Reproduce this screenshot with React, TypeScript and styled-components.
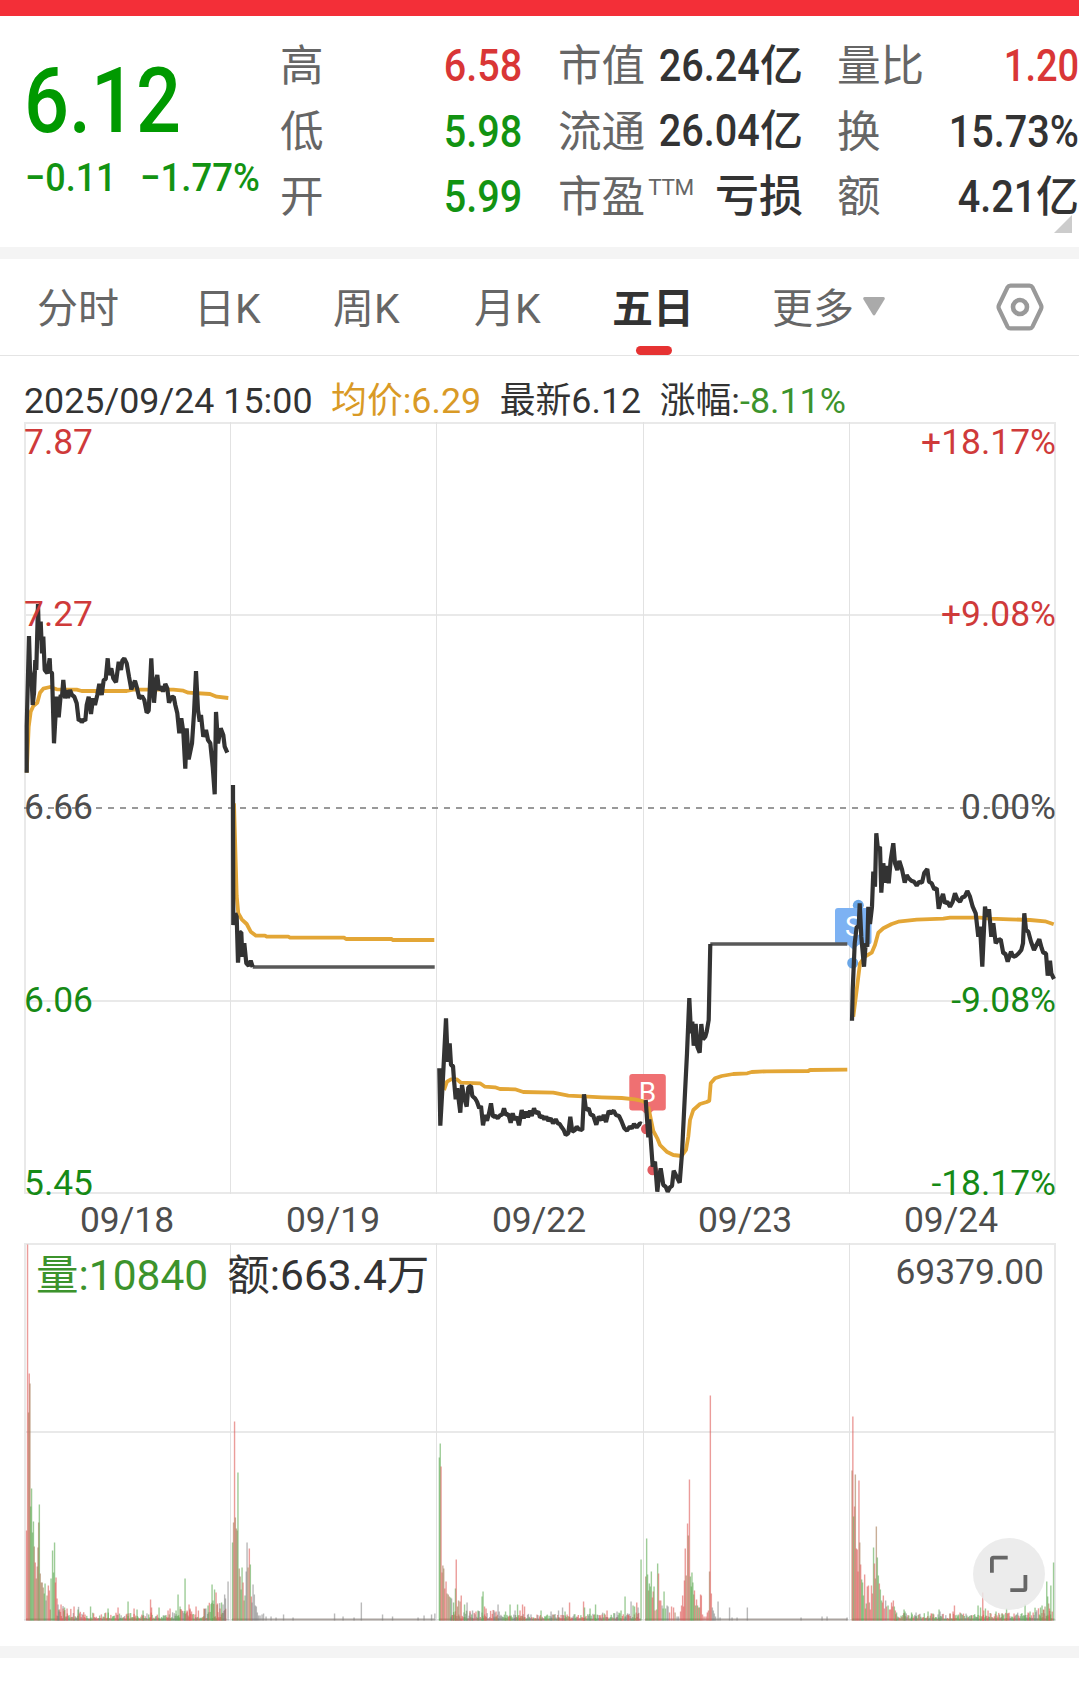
import React from "react";
import styled, { createGlobalStyle } from "styled-components";

const RED = "#d93636";
const GREEN = "#129312";
const INK = "#333333";
const MUTED = "#666666";
const LINE = "#e9e9e9";

const GlobalStyle = createGlobalStyle`
  * { box-sizing: border-box; }
  body {
    margin: 0;
    background: #fff;
    color: ${INK};
    font-family: Roboto, "Noto Sans CJK SC", sans-serif;
  }
`;

const Page = styled.main`
  width: 1079px;
  height: 1689px;
  overflow: hidden;
  display: flex;
  flex-direction: column;
  background: #fff;
`;

const StatusBar = styled.div`
  height: 16px;
  flex: none;
  background: #f32f38;
`;

const Divider = styled.div`
  height: 12px;
  flex: none;
  background: #f4f4f4;
`;

/* ---------- quote header ---------- */

const Quote = styled.section`
  position: relative;
  height: 231px;
  flex: none;
  display: grid;
  grid-template-columns: 255px 242px 277px 280px;
  padding: 17px 0 0 25px;
`;

const Summary = styled.div`
  display: flex;
  flex-direction: column;
  white-space: nowrap;
`;

const Narrow = styled.span<{ $k: number; $origin?: string }>`
  display: inline-block;
  transform: scaleX(${(p) => p.$k});
  transform-origin: ${(p) => p.$origin ?? "right"} center;
`;

const LastPrice = styled.div`
  height: 104px;
  margin-left: -1px;
  padding-top: 15px;
  font-size: 90px;
  line-height: 107px;
  font-weight: 500;
  color: #009900;
`;

const Changes = styled.div`
  display: grid;
  grid-template-columns: 115px auto;
  margin-top: 18px;
  font-size: 39.5px;
  line-height: 46px;
  font-weight: 500;
  color: ${GREEN};
`;

const StatColumn = styled.dl<{ $indent: number }>`
  margin: 0;
  padding-left: ${(p) => p.$indent}px;
  display: grid;
  grid-template-rows: repeat(3, 65.5px);
`;

const Stat = styled.div`
  display: flex;
  justify-content: space-between;
  align-items: center;
  font-size: 43.6px;
  line-height: 65px;
  white-space: nowrap;
`;

const StatLabel = styled.dt`
  display: flex;
  padding-top: 2px;
  color: ${MUTED};
`;

const Sup = styled.span`
  margin-left: 3px;
  font-size: 22.5px;
  line-height: 45px;
  font-weight: 400;
  letter-spacing: -0.4px;
`;

const StatValue = styled.dd<{ $color?: string }>`
  margin: 0;
  font-size: 45px;
  font-weight: 500;
  color: ${(p) => p.$color ?? INK};
`;

const Unit = styled.span<{ $wide?: boolean }>`
  font-size: ${(p) => (p.$wide ? 44 : 43)}px;
`;

const Corner = styled.svg`
  position: absolute;
  left: 1054px;
  top: 199px;
`;

/* ---------- period tabs ---------- */

const Tabs = styled.nav`
  height: 97px;
  flex: none;
  display: grid;
  grid-template-columns: 157px 139px 141px 138px 160px 223px auto;
  padding-left: 37px;
  border-bottom: 1px solid #e4e4e4;
`;

const Tab = styled.button<{ $active?: boolean }>`
  position: relative;
  display: flex;
  align-items: center;
  border: 0;
  padding: 0 0 4px;
  background: none;
  font-family: inherit;
  font-size: 41px;
  font-weight: ${(p) => (p.$active ? 700 : 400)};
  color: ${(p) => (p.$active ? INK : MUTED)};
  white-space: nowrap;

  &::after {
    content: "";
    display: ${(p) => (p.$active ? "block" : "none")};
    position: absolute;
    left: 24px;
    bottom: 0;
    width: 36px;
    height: 9px;
    border-radius: 5px;
    background: #e63232;
  }
`;

const Caret = styled.svg`
  margin: 3px 0 0 9px;
`;

const SettingsButton = styled.button`
  display: flex;
  align-items: center;
  border: 0;
  padding: 0 0 1px 1px;
  background: none;
`;

/* ---------- chart ---------- */

const Info = styled.div`
  height: 66px;
  flex: none;
  display: flex;
  gap: 18.6px;
  padding: 19px 0 0 24px;
  font-size: 35.8px;
  line-height: 53px;
  white-space: pre;
`;

const Tone = styled.span<{ $color: string }>`
  color: ${(p) => p.$color};
`;

const PriceChart = styled.section`
  position: relative;
  height: 772px;
  flex: none;

  svg { display: block; }
`;

const Axis = styled.div<{ $side: "left" | "right" }>`
  position: absolute;
  top: 0;
  ${(p) => (p.$side === "left" ? "left: 24px;" : "right: 23px;")}
  height: 772px;
  text-align: ${(p) => p.$side};
`;

const Tick = styled.span<{ $y: number; $side: "left" | "right"; $color: string }>`
  position: absolute;
  ${(p) => p.$side}: 0;
  top: ${(p) => p.$y - 21}px;
  font-size: 35.4px;
  line-height: 40px;
  color: ${(p) => p.$color};
`;

const Dates = styled.div`
  height: 49px;
  flex: none;
  display: grid;
  grid-template-columns: repeat(5, 206px);
  padding-left: 24px;
  font-size: 35.4px;
  line-height: 52px;
  text-align: center;
  color: #4d4d4d;
`;

const VolumeChart = styled.section`
  position: relative;
  height: 403px;
  flex: none;

  svg { display: block; }
`;

const VolumeLegend = styled.div`
  position: absolute;
  top: 3px;
  left: 36px;
  right: 35px;
  display: flex;
  font-size: 42.5px;
  line-height: 60px;
  white-space: nowrap;
`;

const Turnover = styled.span`
  margin-left: 19px;
`;

const MaxVolume = styled.span`
  margin-left: auto;
  font-size: 35.4px;
  line-height: 52px;
  color: #4d4d4d;
`;

const ExpandButton = styled.button`
  position: absolute;
  left: 973px;
  top: 295px;
  width: 72px;
  height: 72px;
  border: 0;
  border-radius: 50%;
  padding: 0;
  background: rgba(232, 232, 232, 0.84);
`;

/* ---------- series ---------- */

type Series = { ox: number; oy: number; price: string; avg: string; flat?: string };

// Points are stored at three units per pixel, relative to each session's origin.
const sessions: Series[] = [
  {
    ox: 10, oy: 580,
    price: "50,578 50,440 57,168 60,270 65,300 68,375 72,340 76,240 79,270 84,72 87,180 92,125 96,220 100,170 104,270 112,280 119,235 121,275 126,278 132,490 136,420 140,350 146,412 152,345 156,350 160,300 165,355 170,330 174,354 180,330 186,345 193,350 200,370 206,422 212,418 215,428 220,418 226,422 230,375 236,350 243,402 249,355 255,375 262,345 268,312 275,345 281,300 287,298 293,235 297,285 304,265 310,295 318,307 326,245 333,270 337,242 343,235 350,250 357,290 364,328 375,302 380,320 388,355 396,348 403,360 410,398 416,392 424,235 428,320 432,368 438,300 442,285 447,330 455,320 459,335 466,312 472,325 477,368 484,352 491,350 496,375 502,400 508,460 514,415 520,455 526,566 530,445 536,538 546,490 552,400 558,273 564,390 569,425 573,405 580,470 588,450 594,480 601,490 608,560 614,643 618,396 624,490 632,445 640,465 644,500 652,518",
    avg: "50,578 56,440 62,395 70,378 82,368 90,338 100,326 120,321 140,328 200,329 215,333 350,333 370,329 490,329 520,332 535,338 600,342 620,350 655,354",
  },
  {
    ox: 220, oy: 770,
    price: "39,45 40,465 46,430 50,440 54,578 60,487 64,487 67,560 73,520 79,580 86,587 92,572 98,591",
    flat: "98,591 644,591",
    avg: "42,100 50,378 55,430 65,448 80,462 92,485 108,497 135,497 140,500 205,500 210,503 372,503 378,507 515,507 518,510 643,510",
  },
  {
    ox: 425, oy: 1000,
    price: "43,205 46,377 53,250 63,55 68,185 74,130 78,195 84,198 87,240 92,298 97,265 100,290 106,338 111,255 118,295 125,320 130,262 138,258 142,288 150,295 156,305 163,325 168,318 174,376 180,345 186,362 192,340 198,310 204,350 212,348 218,355 226,345 231,345 237,325 243,345 250,342 257,368 263,340 269,360 275,350 282,376 290,330 296,355 302,335 309,352 315,332 320,348 327,325 332,340 340,335 345,352 352,348 358,358 364,350 370,362 377,355 384,370 392,358 398,370 404,372 410,382 416,390 422,405 430,400 436,350 442,395 450,390 455,380 462,388 472,390 477,283 483,330 491,325 497,345 504,345 514,374 521,350 530,360 536,345 543,366 551,333 557,340 566,332 573,345 582,348 590,365 598,385 606,392 614,380 621,385 627,372 635,382 645,370 650,372",
    avg: "57,270 66,245 78,238 95,238 108,248 165,250 180,260 210,262 225,267 270,268 295,276 385,278 430,287 475,289 530,292 590,294 630,298 652,303 666,310",
  },
  {
    ox: 640, oy: 920,
    price: "17,540 25,652 28,598 38,740 45,725 52,815 57,770 62,745 70,795 77,800 83,815 90,802 96,798 101,752 110,770 119,788 126,700 133,560 141,400 148,234 153,340 157,305 161,377 167,312 172,380 179,398 184,312 189,358 196,350 200,335 206,300 211,72",
    flat: "211,72 622,72",
    avg: "25,560 33,600 40,633 52,655 60,675 80,695 100,705 125,708 138,690 145,650 150,600 160,570 180,552 200,546 208,542 212,490 225,475 245,468 280,462 322,460 335,456 380,454 505,453 510,450 622,449",
  },
  {
    ox: 830, oy: 810,
    price: "66,632 68,540 74,400 80,350 86,350 89,280 94,380 102,470 107,400 112,410 115,290 120,342 126,290 130,185 135,230 139,70 144,120 150,110 154,248 160,160 166,218 170,168 176,220 182,150 190,100 195,160 202,180 208,153 216,178 224,218 230,195 236,205 244,212 252,215 260,227 268,215 276,218 283,188 292,177 297,215 305,220 313,238 320,235 326,296 333,270 339,252 345,280 352,275 360,290 368,275 375,250 382,268 390,275 397,262 404,260 412,243 420,260 428,290 437,310 445,380 450,350 457,470 465,290 470,320 477,298 484,380 490,340 497,400 504,390 512,388 520,430 526,430 533,455 543,425 550,440 558,437 566,430 574,420 579,400 583,310 588,360 595,365 603,395 612,420 622,400 628,388 635,415 640,428 648,430 653,497 660,452 664,490 672,507",
    avg: "70,620 80,540 90,460 105,440 125,428 135,405 145,368 160,355 185,342 205,335 260,329 340,326 360,323 450,323 480,326 540,328 600,330 645,334 671,343",
  },
];

const CHART_TOP = 422;
const gridX = [
  [24, 2], [230, 1], [436, 1], [643, 1], [849, 1], [1054, 2],
];

const plot = (s: Series, pts?: string) =>
  (pts ?? "")
    .split(" ")
    .filter(Boolean)
    .map((p) => {
      const [x, y] = p.split(",").map(Number);
      return `${(s.ox + x / 3).toFixed(1)},${(s.oy - CHART_TOP + y / 3).toFixed(1)}`;
    })
    .join(" ");

// r: up minute, g: down minute, n: unchanged, m: overlapping up and down
type Kind = "r" | "g" | "n" | "m";
const barFill: Record<Kind, string> = {
  r: "rgba(222,90,86,0.6)",
  g: "rgba(92,170,82,0.6)",
  n: "rgba(120,120,120,0.52)",
  m: "rgba(170,130,95,0.65)",
};

const volumeSpikes =
  "26.5,90,r 27.5,376,r 28.5,208,m 29.2,247,r 29.9,237,m 30.7,114,g 31.5,132,g 32.5,88,g 33.4,99,g 34.2,74,m 35.2,58,r 36.2,42,m 37.2,54,m 38,73,m 38.6,98,m 39.3,116,g 40.2,47,m 41.2,38,m 42.2,38,m 43.2,33,m 44.2,27,g 45,37,g 46,20,n 47,25,m 48.3,35,r 49.3,30,r 50.2,11,r 51,42,g 52.5,70,g 53.5,48,g 54.5,78,g 55.3,38,r 56,43,r 57,22,r 58,16,n 59,9,n 61,16,r 63,12,r 64.5,13,g 67,12,r 74,14,r 78,11,g 90.5,14,g 108,12,g 118,13,r 128,19,g 134,12,r 137,11,g 143,10,g 150.5,21,r 151.5,13,r 159,13,g 168,10,r 170,12,r 176,10,g 178,26,g 180,14,g 185,42,g 187,10,r 189,16,r 190,12,r 196,14,r 204,12,r 208,15,g 212,36,g 213,20,g 214.5,31,g 216,28,r 217.5,17,r 220,12,r 221.5,18,g 223,16,n 224.6,26,n 225.4,22,n 228,39,n " +
  "232.5,78,g 233.5,98,m 234.5,199,r 235.3,103,m 236.3,92,m 237.1,90,m 237.9,148,g 239.2,52,m 240.1,44,m 241,31,g 242,53,g 243,38,r 244,20,m 245,25,g 246.2,49,n 247,78,n 248,53,m 249.3,72,r 250.3,56,g 251.3,24,r 252,18,n 253,36,n 254.3,26,n 255.3,15,n 256.3,14,n 257.3,8,n 258.5,5,n 260,5,n 262,6,n 263.5,7,n 266,4,n 271,4,n 276,3,n 283.5,6,n 293,3,n 334.5,7,n 343,4,n 354,3,n 361.3,18,n 382.5,6,n 392.5,4,n 418,3,n 424,5,n 431.5,6,n 434.8,7,n " +
  "439.3,163,g 440.2,177,g 441,154,r 442,48,r 442.8,55,m 443.7,52,m 444.7,32,r 446,39,r 447,27,m 448.2,26,m 449.3,24,m 450.5,23,g 451.5,22,n 453.5,18,g 455.4,32,g 456.2,61,r 457.5,14,m 458.5,20,m 460,19,m 461.2,25,r 464.5,16,g 467,18,n 470,8,n 472.5,10,n 478,10,g 482,24,g 483,29,g 484.5,14,r 486,12,r 494,10,n 496,9,r 498,16,n 505.5,9,g 510,16,g 515,10,n 517.5,16,g 520,10,r 522.5,16,r 524.5,14,r 541,10,g 551,9,n 558.5,10,n 562.5,13,n 565,9,g 569.5,18,r 583.5,19,r 584.5,13,g 590,12,g 595.5,16,g 602,6,r 607,10,r 617,9,n 621,10,g 625,24,g 628,6,r 631,19,n 633,15,g 634.5,14,g 636.7,18,r 638,13,n 641,61,g " +
  "645.7,44,m 646.6,82,g 647.5,46,g 648.5,30,m 649.3,37,g 650.3,34,g 651.3,49,g 652.3,23,r 653.2,29,r 654,34,g 655,10,r 656.5,11,m 657.6,57,g 658.5,47,r 659.5,20,r 660.7,20,r 662,15,n 663,12,g 664,29,g 665.5,12,g 667,15,n 668,14,n 669.5,8,r 671.5,14,r 673.5,13,r 675,8,m 677,4,n 678.5,4,n 680.5,9,r 681.5,15,r 682.6,25,r 683.5,14,r 684.4,40,r 685.2,72,r 686.2,45,m 687.5,97,r 688.3,85,m 689.4,141,r 690.3,44,g 691.3,34,g 691.9,48,g 692.8,38,g 693.7,26,g 694.4,30,r 695.5,15,g 696.5,21,r 697.5,15,g 698.5,13,r 699.5,13,g 700.5,26,r 701.3,25,r 702.5,6,r 704,4,r 706,4,r 707.3,8,r 708.4,10,r 709.5,49,m 710.3,225,r 711.3,27,r 712.3,13,n 713.3,10,n 714.3,7,n 715.5,4,n 718,19,n 720,3,n 729.5,13,n 732,3,n 737,3,n 747.3,13,n 801,3,n 822,4,n 827,4,n 847,3,n " +
  "852,150,m 852.8,204,r 853.6,104,g 854.5,114,r 855.3,146,m 856.3,72,r 857.2,71,r 858,49,r 858.9,140,r 859.7,78,m 860.6,56,r 861.6,41,g 862.5,38,g 863.4,25,g 864.6,46,r 865.5,12,r 866.3,17,g 867.3,34,r 868.4,35,r 869.3,18,m 870.3,11,r 871.4,35,r 872.4,27,r 873.5,73,g 874.4,57,r 875.3,42,m 876.3,94,m 877.3,63,g 878.3,45,g 879.3,37,r 880.3,31,g 881.5,20,g 882.4,18,r 883.3,25,r 884.4,12,r 885.6,20,n 886.5,14,r 888,15,g 889.5,11,r 890.5,11,r 891.5,18,r 892.3,14,r 893.3,20,r 894.3,14,g 895.3,10,r 896.5,8,g 904,11,g 905,9,g 911.5,8,g 916,8,n 928,9,g 933,7,g 939,11,g 940,9,n 950,7,r 953,9,r 954.4,15,r 971,5,g 978,15,g 980.5,13,g 982.7,28,r 983.7,10,r 985.4,12,g 988,10,r 996,9,g 1002,7,g 1006.5,12,g 1014,7,r 1025,16,g 1028,8,r 1030,9,g 1040.5,13,g 1042,15,g 1043.5,11,r 1045,14,m 1046.7,39,g 1047.6,24,g 1048.6,17,m 1049.5,12,r 1050.8,35,g 1053.5,58,g";

const spikes = volumeSpikes.split(" ").map((s) => {
  const [x, h, k] = s.split(",");
  return { x: Number(x), h: Number(h), k: k as Kind };
});

// Quiet minutes between the spikes: [from, to, typical height, red share, green share]
const quiet: [number, number, number, number, number][] = [
  [57, 85, 10, 0.5, 0.3],
  [85, 170, 5, 0.45, 0.35],
  [170, 205, 8, 0.45, 0.35],
  [205, 226, 13, 0.3, 0.5],
  [451, 500, 7, 0.4, 0.3],
  [500, 600, 4, 0.35, 0.3],
  [600, 640, 5, 0.3, 0.35],
  [895, 960, 4.5, 0.4, 0.35],
  [960, 1035, 5, 0.4, 0.35],
  [1035, 1053, 10, 0.4, 0.4],
];

const noise = (i: number) => {
  const v = Math.sin(i * 12.9898 + 4.1) * 43758.5453;
  return v - Math.floor(v);
};

const quietBars = quiet.flatMap(([from, to, h, red, green], q) => {
  const out: { x: number; h: number; k: Kind }[] = [];
  for (let x = from, i = 0; x < to; x += 0.86, i++) {
    const seed = q * 500 + i;
    const c = noise(seed + 9000);
    out.push({
      x,
      h: 1.5 + h * Math.pow(noise(seed), 1.4) * 1.3,
      k: c < red ? "r" : c < red + green ? "g" : "n",
    });
  }
  return out;
});

const VOLUME_BASE = 377.5;
const sessionFloor: [number, number][] = [
  [26, 200.5], [232, 202.5], [439, 202], [645, 202.5], [852, 202.5],
];

const GridColumns = ({ height }: { height: number }) => (
  <>
    {gridX.map(([x, w]) => (
      <rect key={x} x={x} y={0} width={w} height={height} fill={w === 1 ? "#e2e2e2" : LINE} />
    ))}
  </>
);

const Marker = ({ x, y, color, letter }: { x: number; y: number; color: string; letter: string }) => (
  <g>
    <rect x={x} y={y} width={36.5} height={36.5} rx={3} fill={color} />
    <path d={`M${x + 12} ${y + 36}h12.5l-6.2 6z`} fill={color} />
    <text x={x + 18.2} y={y + 28} textAnchor="middle" fontSize="28" fontFamily="Roboto, sans-serif" fill="#fff">
      {letter}
    </text>
  </g>
);

const ticks: { y: number; left: string; right: string; color: string }[] = [
  { y: 21, left: "7.87", right: "+18.17%", color: "#cf3a3a" },
  { y: 192.5, left: "7.27", right: "+9.08%", color: "#cf3a3a" },
  { y: 385.5, left: "6.66", right: "0.00%", color: "#4d4d4d" },
  { y: 578.5, left: "6.06", right: "-9.08%", color: "#168a16" },
  { y: 761.5, left: "5.45", right: "-18.17%", color: "#168a16" },
];

const Row = ({
  label, sup, num, unit, color, k = 0.88,
}: { label: string; sup?: string; num?: string; unit?: string; color?: string; k?: number }) => (
  <Stat>
    <StatLabel>
      {label}
      {sup && <Sup>{sup}</Sup>}
    </StatLabel>
    <StatValue $color={color}>
      {num && <Narrow $k={k}>{num}</Narrow>}
      {unit && <Unit $wide={!num}>{unit}</Unit>}
    </StatValue>
  </Stat>
);

export default function App() {
  return (
    <Page>
      <GlobalStyle />
      <StatusBar />
      <Quote>
        <Summary>
          <LastPrice><Narrow $k={0.88} $origin="left">6.12</Narrow></LastPrice>
          <Changes>
            <Narrow $k={0.91} $origin="left">−0.11</Narrow>
            <Narrow $k={0.925} $origin="left">−1.77%</Narrow>
          </Changes>
        </Summary>
        <StatColumn $indent={0}>
          <Row label="高" num="6.58" color={RED} />
          <Row label="低" num="5.98" color={GREEN} />
          <Row label="开" num="5.99" color={GREEN} />
        </StatColumn>
        <StatColumn $indent={36}>
          <Row label="市值" num="26.24" unit="亿" />
          <Row label="流通" num="26.04" unit="亿" />
          <Row label="市盈" sup="TTM" unit="亏损" />
        </StatColumn>
        <StatColumn $indent={38}>
          <Row label="量比" num="1.20" color={RED} k={0.845} />
          <Row label="换" num="15.73%" />
          <Row label="额" num="4.21" unit="亿" />
        </StatColumn>
        <Corner width="18" height="18" viewBox="0 0 18 18"><path d="M18 0v18H0z" fill="#cccccc" /></Corner>
      </Quote>
      <Divider />

      <Tabs>
        <Tab>分时</Tab>
        <Tab>日K</Tab>
        <Tab>周K</Tab>
        <Tab>月K</Tab>
        <Tab $active>五日</Tab>
        <Tab>
          更多
          <Caret width="22" height="19" viewBox="0 0 22 19"><path d="M1.5 0h19q2 .4 1 2.4L12.3 17.5q-1.3 1.8-2.6 0L.5 2.4Q-.5.4 1.5 0z" fill="#aaaaaa" /></Caret>
        </Tab>
        <SettingsButton aria-label="settings">
          <svg width="48" height="48" viewBox="0 0 48 48" fill="none" stroke="#999999" strokeWidth="4.2" strokeLinejoin="round">
            <path d="M14.5 2.6h19q2 0 3 1.7l8.4 17.5q1.1 2.2 0 4.4l-8.4 17.5q-1 1.7-3 1.7h-19q-2 0-3-1.7L3.1 26.2q-1.1-2.2 0-4.4L11.5 4.3q1-1.7 3-1.7z" />
            <circle cx="24" cy="24" r="7" strokeWidth="4.6" />
          </svg>
        </SettingsButton>
      </Tabs>

      <Info>
        <span>2025/09/24 15:00</span>
        <Tone $color="#d99a26">均价:6.29</Tone>
        <span>最新6.12</span>
        <span>涨幅:<Tone $color="#3c932c">-8.11%</Tone></span>
      </Info>

      <PriceChart>
        <svg width="1079" height="772" viewBox="0 0 1079 772">
          {[0, 192, 578, 770].map((y) => (
            <rect key={y} x={24} y={y} width={1032} height={2} fill={LINE} />
          ))}
          <GridColumns height={772} />
          <line x1="24" x2="1055" y1="386" y2="386" stroke="#999999" strokeWidth="2" strokeDasharray="6 6" />
          <circle cx="646.3" cy="707" r="5.3" fill="#e05a60" />
          <circle cx="652.7" cy="748" r="5.3" fill="#e05a60" />
          <circle cx="858.3" cy="483.3" r="5.5" fill="#6aa6e6" />
          <circle cx="852.7" cy="541" r="5.5" fill="#6aa6e6" />
          <Marker x={629.3} y={652} color="#ef7072" letter="B" />
          <Marker x={835} y={486} color="#7db2f3" letter="S" />
          {sessions.map((s) => (
            <g key={s.ox} fill="none" strokeLinejoin="bevel">
              <polyline points={plot(s, s.avg)} stroke="#e3a636" strokeWidth="3.8" strokeLinejoin="round" />
              <polyline points={plot(s, s.flat)} stroke="#585858" strokeWidth="3.6" />
              <polyline points={plot(s, s.price)} stroke="#333333" strokeWidth="4.2" />
            </g>
          ))}
        </svg>
        <Axis $side="left">
          {ticks.map((t) => (
            <Tick key={t.left} $y={t.y} $side="left" $color={t.color}>{t.left}</Tick>
          ))}
        </Axis>
        <Axis $side="right">
          {ticks.map((t) => (
            <Tick key={t.right} $y={t.y} $side="right" $color={t.color}>{t.right}</Tick>
          ))}
        </Axis>
      </PriceChart>

      <Dates>
        {["09/18", "09/19", "09/22", "09/23", "09/24"].map((d) => <span key={d}>{d}</span>)}
      </Dates>

      <VolumeChart>
        <svg width="1079" height="403" viewBox="0 0 1079 403">
          {[0, 188].map((y) => (
            <rect key={y} x={24} y={y} width={1032} height={2} fill={LINE} />
          ))}
          <GridColumns height={VOLUME_BASE} />
          <rect x={24} y={VOLUME_BASE - 1.5} width={1032} height={1.5} fill="#dddddd" />
          {sessionFloor.map(([x, w]) => (
            <rect key={x} x={x} y={VOLUME_BASE - 2} width={w} height={2} fill="#aaa39f" />
          ))}
          {[...quietBars, ...spikes].map((b, i) => (
            <rect key={i} x={b.x - 0.65} y={VOLUME_BASE - b.h} width={1.4} height={b.h} fill={barFill[b.k]} />
          ))}
        </svg>
        <VolumeLegend>
          <Tone $color="#3c932c">量:10840</Tone>
          <Turnover>额:663.4万</Turnover>
          <MaxVolume>69379.00</MaxVolume>
        </VolumeLegend>
        <ExpandButton aria-label="expand">
          <svg width="72" height="72" viewBox="0 0 72 72" fill="none" stroke="#666666" strokeWidth="3.8">
            <path d="M34.7 19.6H20.5q-1.6 0-1.6 1.6V34.7M37.3 52.2h13.5q1.6 0 1.6-1.6V37" />
          </svg>
        </ExpandButton>
      </VolumeChart>
      <Divider />
    </Page>
  );
}
